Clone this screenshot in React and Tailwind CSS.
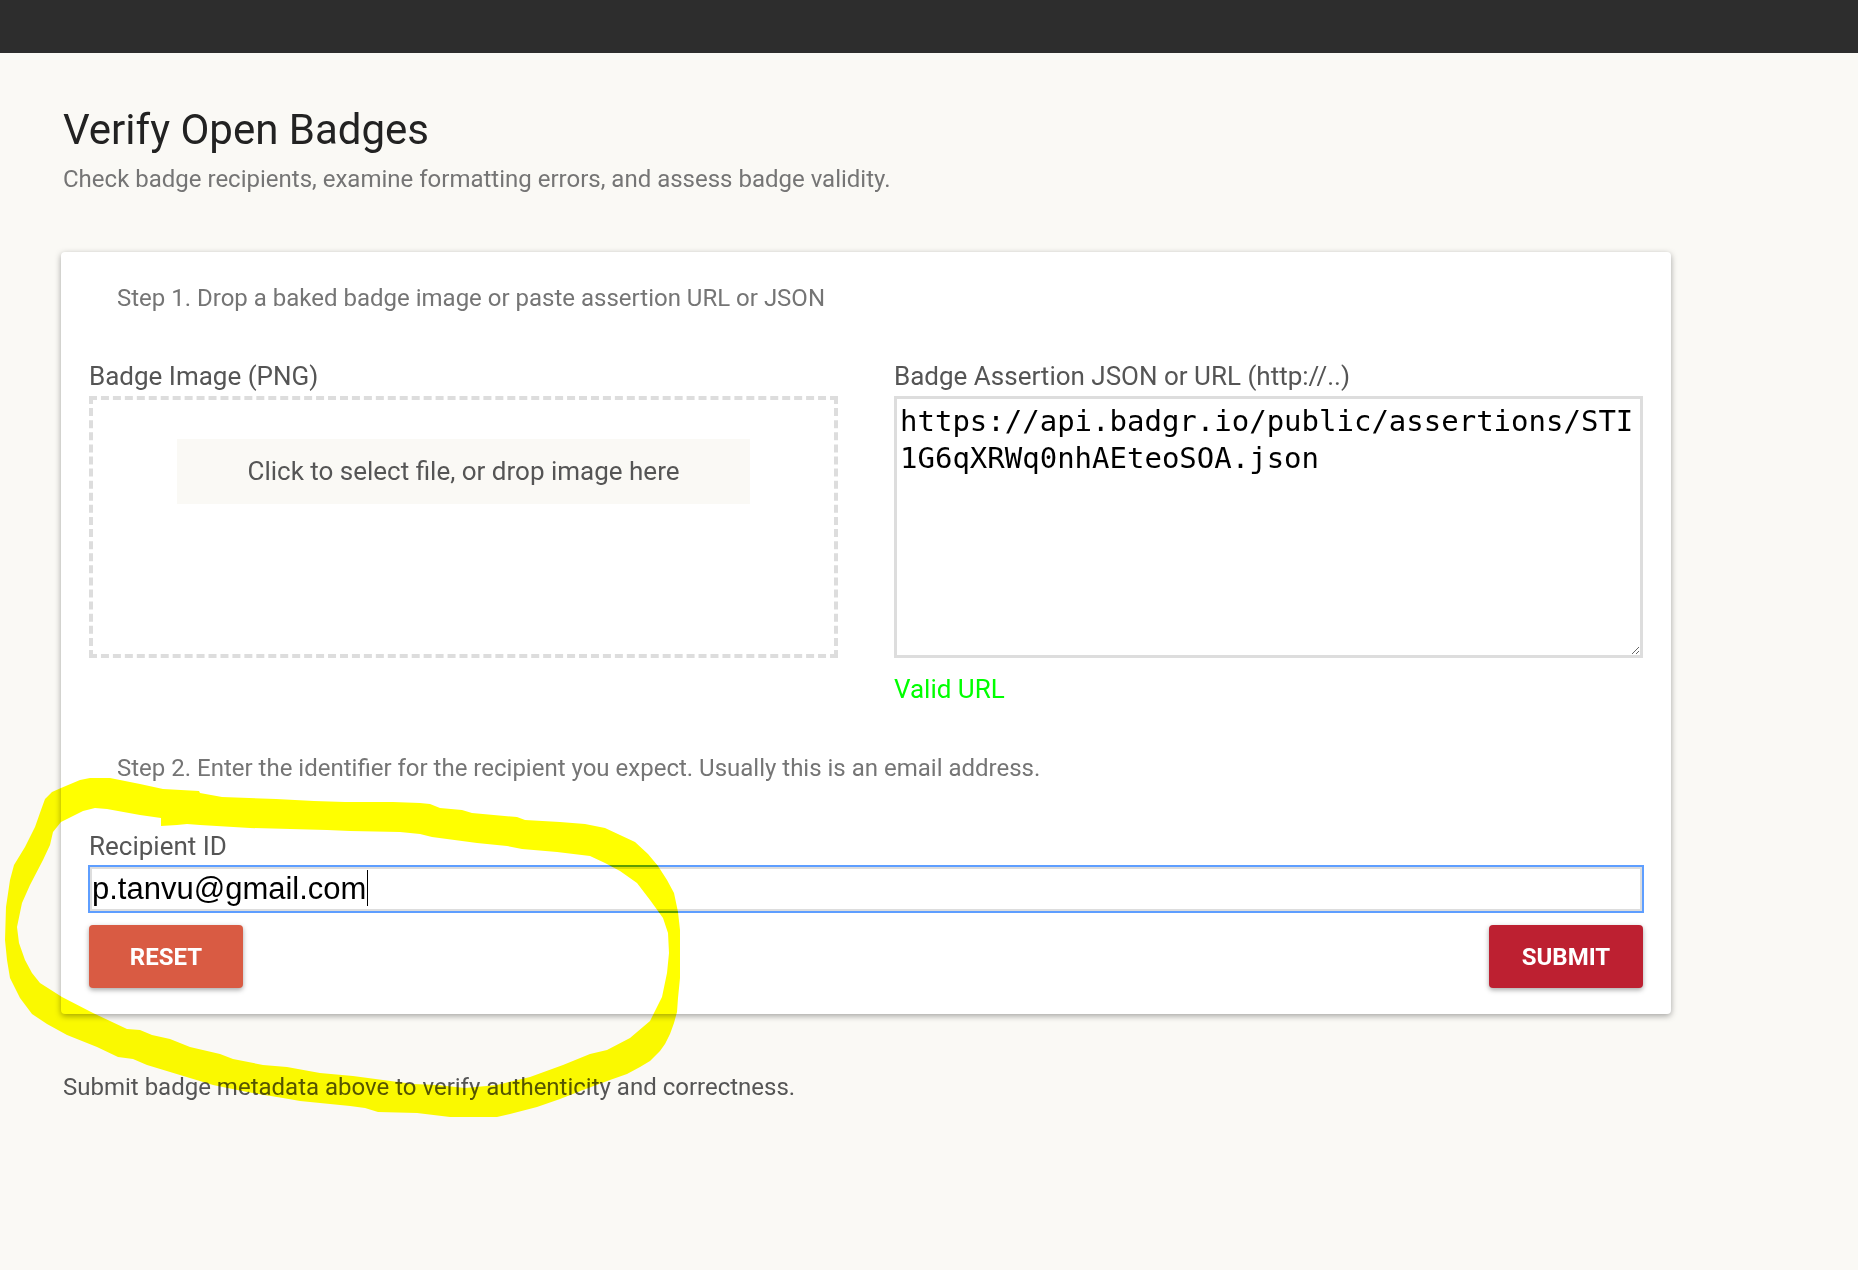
import { useState } from "react";

const HIGHLIGHT =
  "M45 799 L52 792 L61 788 L80 780 L90 778 L110 778 L140 784 L163 789 L199 791 L200 793 L222 797 L276 799 L314 801 L345 802 L393 802 L420 803 L430 804 L440 808 L462 810 L472 813 L517 817 L525 820 L560 822 L585 824 L605 828 L620 835 L635 842 L648 854 L658 866 L667 880 L674 893 L678 912 L680 930 L680 978 L678 998 L677 1012 L674 1023 L670 1034 L665 1044 L660 1051 L650 1061 L640 1067 L627 1074 L610 1080 L583 1090 L560 1099 L537 1107 L510 1114 L497 1117 L450 1117 L417 1113 L378 1112 L365 1108 L350 1106 L300 1101 L283 1098 L247 1092 L213 1085 L180 1075 L147 1065 L133 1059 L118 1057 L97 1047 L67 1035 L47 1024 L32 1014 L20 998 L10 978 L7 960 L5 940 L6 907 L10 880 L14 865 L25 847 L35 827 L41 810 Z " +
  "M61 822 L53 832 L50 845 L43 860 L30 885 L22 903 L17 927 L19 943 L25 960 L32 973 L40 983 L62 997 L93 1013 L127 1029 L140 1030 L152 1035 L170 1039 L190 1047 L220 1054 L233 1059 L263 1065 L287 1067 L320 1073 L353 1076 L383 1080 L413 1084 L437 1085 L465 1088 L497 1085 L530 1077 L563 1065 L590 1054 L607 1050 L630 1038 L650 1021 L662 997 L667 973 L669 953 L668 933 L663 918 L650 900 L637 883 L620 871 L605 863 L590 856 L557 852 L522 849 L507 846 L477 843 L432 837 L420 834 L400 832 L350 831 L327 830 L250 828 L200 825 L187 824 L177 825 L161 826 L161 818 L140 815 L107 809 L95 808 L83 811 Z";

const cardShadow = "shadow-[0_2px_6px_rgba(0,0,0,0.35)]";

export default function App() {
  const [assertion, setAssertion] = useState(
    "https://api.badgr.io/public/assertions/STI1G6qXRWq0nhAEteoSOA.json"
  );
  const [recipient, setRecipient] = useState("p.tanvu@gmail.com");

  return (
    <div className="relative min-h-screen bg-[#faf9f5] font-['Roboto',sans-serif] text-[#555555]">
      <header className="h-[53px] bg-[#2d2d2d]" />
      <main className="max-w-[1671px] pt-[53px] pb-14 pl-[61px]">
        <div className="px-0.5">
          <h1 className="text-[42px] leading-[48px] text-[#222222]">Verify Open Badges</h1>
          <p className="mt-[7px] text-[24px] leading-9 text-[#757575]">
            Check badge recipients, examine formatting errors, and assess badge validity.
          </p>
        </div>

        <form
          className={`mt-[55px] rounded-[4px] bg-white px-7 pt-7 pb-[26px] ${cardShadow}`}
          onSubmit={(e) => e.preventDefault()}
        >
          <p className="px-7 text-[24px] leading-9 text-[#757575]">
            Step 1. Drop a baked badge image or paste assertion URL or JSON
          </p>
          <div className="mt-[42px] grid grid-cols-2 gap-14">
            <div>
              <h2 className="text-[26px] leading-9">Badge Image (PNG)</h2>
              <div className="mt-0.5 h-[262px] border-4 border-dashed border-[#dddddd] px-[84px] pt-[39px]">
                <button
                  type="button"
                  className="block h-[65px] w-full bg-[#faf9f5] pb-0.5 text-[26px] leading-9"
                >
                  Click to select file, or drop image here
                </button>
              </div>
            </div>
            <div>
              <label htmlFor="assertion" className="block text-[26px] leading-9">
                Badge Assertion JSON or URL (http://..)
              </label>
              <textarea
                id="assertion"
                spellCheck={false}
                value={assertion}
                onChange={(e) => setAssertion(e.target.value)}
                className="mt-0.5 block h-[262px] w-full border-[3px] border-[#dddddd] bg-white px-[3px] py-1 font-['DejaVu_Sans_Mono',monospace] text-[29px] leading-[37px] break-all text-black outline-none"
              />
              <p className="mt-[13px] text-[26px] leading-9 text-[#00ff00]">Valid URL</p>
            </div>
          </div>

          <p className="mt-[43px] px-7 text-[24px] leading-9 text-[#757575]">
            Step 2. Enter the identifier for the recipient you expect. Usually this is an email
            address.
          </p>
          <label htmlFor="recipient" className="mt-[42px] block text-[26px] leading-9">
            Recipient ID
          </label>
          <div className="relative mt-0.5">
            <input
              id="recipient"
              type="text"
              value={recipient}
              onChange={(e) => setRecipient(e.target.value)}
              className="block h-[46px] w-full border-[3px] border-[#dddddd] bg-white px-0 font-['Liberation_Sans',Arial,sans-serif] text-[31px] leading-9 text-black outline-2 -outline-offset-1 outline-[#5e9eff]"
            />
            <span className="absolute top-1 left-[278px] h-9 w-px bg-black" />
          </div>
          <div className="mt-[13px] flex justify-between">
            <button
              type="button"
              className="h-[63px] w-[154px] rounded-[4px] bg-[#d95b43] text-[24px] leading-9 font-bold text-white shadow-[0_2px_5px_rgba(0,0,0,0.35)]"
            >
              RESET
            </button>
            <button
              type="submit"
              className="h-[63px] w-[154px] rounded-[4px] bg-[#bd2031] text-[24px] leading-9 font-bold text-white shadow-[0_2px_5px_rgba(0,0,0,0.35)]"
            >
              SUBMIT
            </button>
          </div>
        </form>

        <p className="mt-[55px] px-0.5 text-[24px] leading-9">
          Submit badge metadata above to verify authenticity and correctness.
        </p>
      </main>

      <svg
        aria-hidden="true"
        className="pointer-events-none absolute top-0 left-0 mix-blend-multiply"
        width="700"
        height="1140"
        viewBox="0 0 700 1140"
      >
        <path d={HIGHLIGHT} fill="#ffff00" fillRule="evenodd" />
      </svg>
    </div>
  );
}
